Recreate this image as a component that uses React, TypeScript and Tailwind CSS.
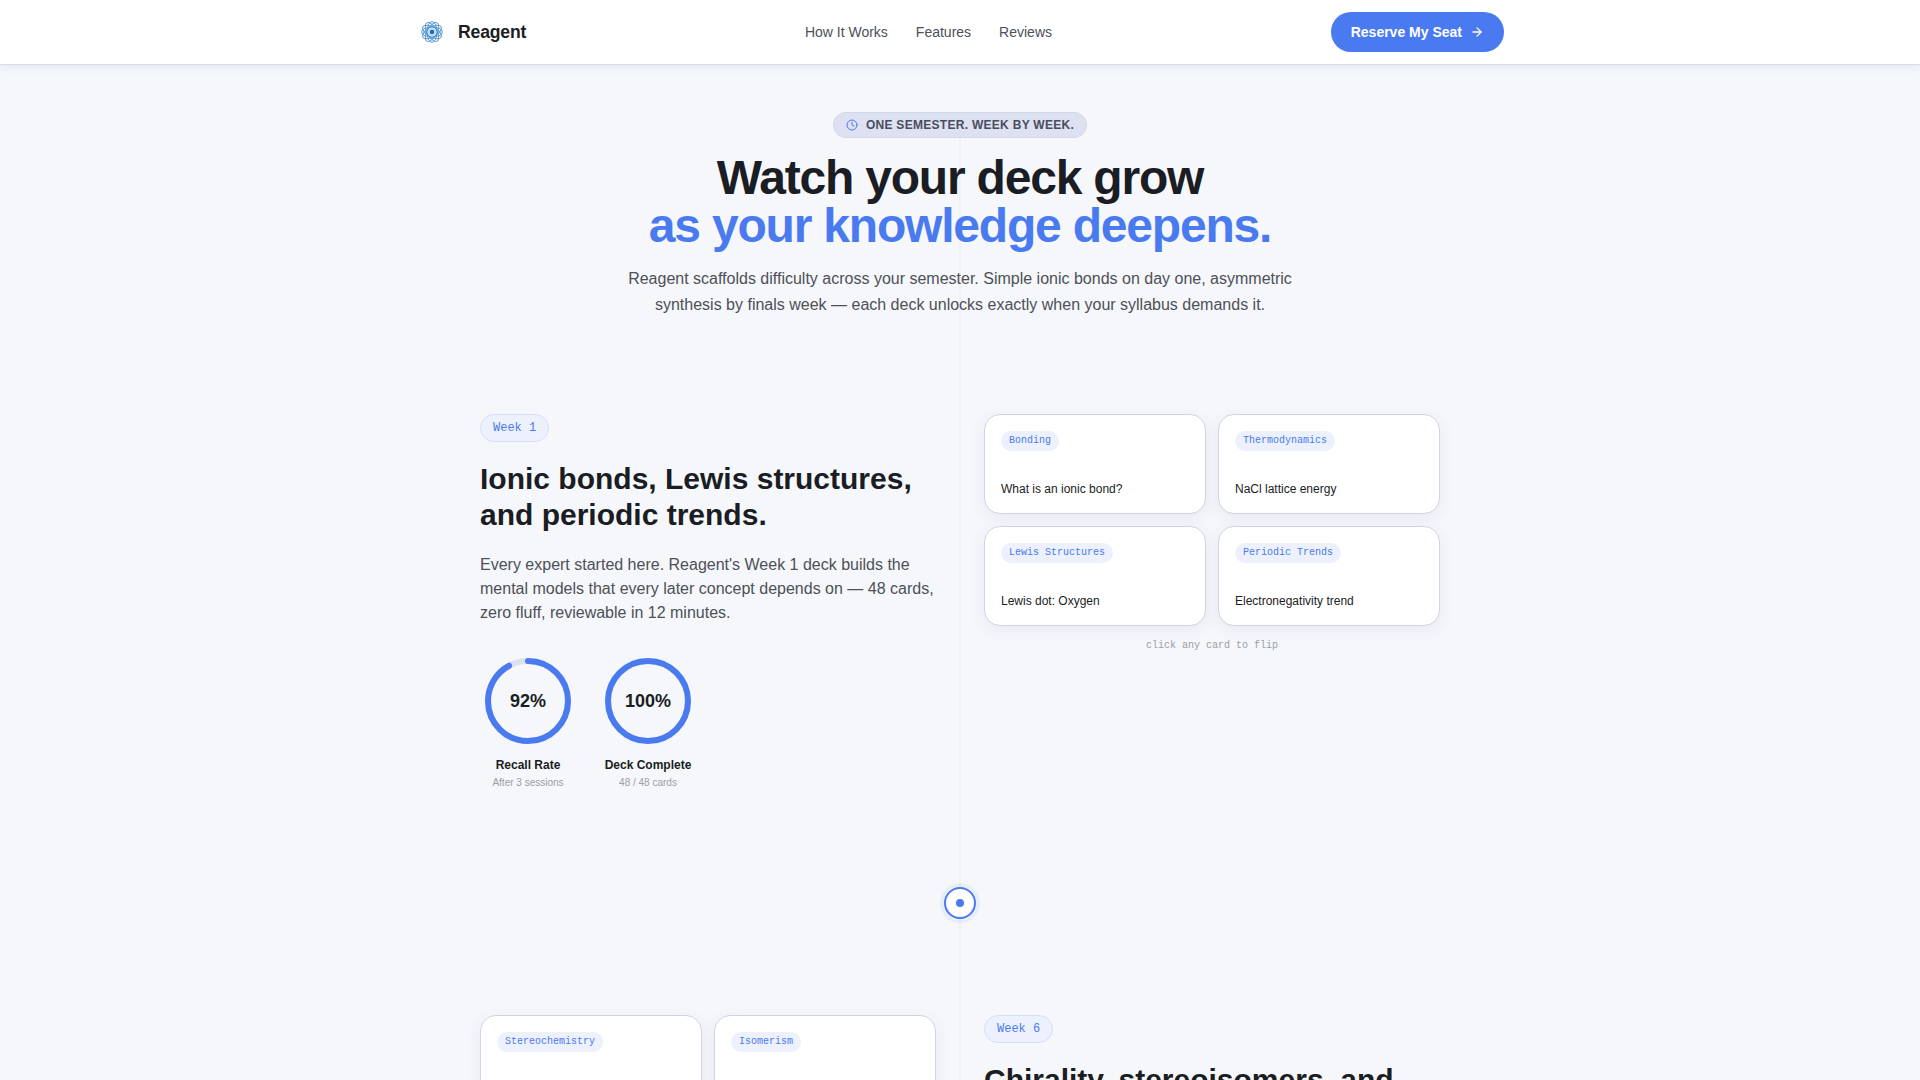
import React from 'react';
import { ArrowRight, Clock } from 'lucide-react';

const sans = '"Liberation Sans", Arial, sans-serif';

function Logo() {
  const angles = [0, 30, 60, 90, 120, 150];
  return (
    <svg width="28" height="28" viewBox="-2 -2 28 28" fill="none">
      {angles.map((a) => (
        <ellipse key={a} cx="12" cy="12" rx="10.5" ry="5" stroke="#3f86cc" strokeWidth="1" opacity="0.8" transform={`rotate(${a} 12 12)`} />
      ))}
      <circle cx="12" cy="12" r="4" fill="#5a9fe0" opacity="0.4" />
      <circle cx="12" cy="12" r="2.2" fill="#2468b4" />
    </svg>
  );
}

function FlashCard({ tag, title }: { tag: string; title: string }) {
  return (
    <div className="flex h-[100px] flex-col justify-between rounded-2xl border border-[#d0d4e6] bg-white px-4 pt-4 pb-[15px] shadow-[0_4px_16px_rgba(60,80,140,0.08)]">
      <span className="self-start rounded-full bg-[#edf1fd] px-2 py-[3px] font-['Liberation_Mono',monospace] text-[10px] leading-[14px] text-[#4a7af0]">
        {tag}
      </span>
      <p className="text-xs leading-[18px] text-[#1a1d23]">{title}</p>
    </div>
  );
}

function Ring({ pct, value, label, sub }: { pct: number; value: string; label: string; sub: string }) {
  const r = 40;
  const c = 2 * Math.PI * r;
  return (
    <div className="flex w-24 flex-col items-center">
      <div className="relative h-24 w-24">
        <svg width="96" height="96" viewBox="0 0 96 96" className="-rotate-90">
          <circle cx="48" cy="48" r={r} fill="none" stroke="#dde1ef" strokeWidth="6" />
          <circle cx="48" cy="48" r={r} fill="none" stroke="#4a7af0" strokeWidth="6" strokeLinecap="round" strokeDasharray={`${(c * pct) / 100} ${c}`} />
        </svg>
        <span className="absolute inset-0 flex items-center justify-center text-lg font-bold text-[#1a1d23]">{value}</span>
      </div>
      <p className="mt-[7px] whitespace-nowrap text-xs leading-[18px] font-bold text-[#1a1d23]">{label}</p>
      <p className="mt-px whitespace-nowrap text-[10px] leading-4 text-[#9a9da6]">{sub}</p>
    </div>
  );
}

function WeekPill({ children }: { children: React.ReactNode }) {
  return (
    <span className="inline-block rounded-full border border-[#d6def6] bg-[#edf1fd] px-3 py-[5px] font-['Liberation_Mono',monospace] text-xs leading-4 text-[#4a7af0]">
      {children}
    </span>
  );
}

export default function App() {
  return (
    <div className="min-h-screen bg-[#f5f7fa]" style={{ fontFamily: sans }}>
      <nav className="sticky top-0 z-20 box-content h-16 border-b border-[#d9dcea] bg-white shadow-[0_2px_8px_rgba(60,80,160,0.1)]">
        <div className="mx-auto flex h-full w-[1088px] items-center justify-between">
          <div className="flex items-center gap-3 pl-[2px]">
            <Logo />
            <span className="text-[17.6px] font-bold tracking-[-0.01em] text-[#1a1d23]">Reagent</span>
          </div>
          <div className="flex items-center gap-7 text-sm text-[#4d5058]">
            <span>How It Works</span>
            <span>Features</span>
            <span>Reviews</span>
          </div>
          <button className="flex h-10 items-center gap-2 rounded-full bg-[#4a7af0] px-5 text-sm font-bold text-white">
            Reserve My Seat
            <ArrowRight size={14} strokeWidth={2.2} />
          </button>
        </div>
      </nav>

      <main className="relative">
        <div className="absolute top-[68px] bottom-0 left-1/2 w-0.5 -translate-x-1/2 bg-[#eff1f5]" />

        <header className="relative flex flex-col items-center pt-[47px] text-center">
          <div className="flex h-[26px] items-center gap-2 rounded-full border border-[#d3d7ea] bg-[#dde1f1] px-3 text-xs font-bold tracking-[0.024em] text-[#4a4d5f]">
            <Clock size={12} strokeWidth={2} className="text-[#4a7af0]" />
            ONE SEMESTER. WEEK BY WEEK.
          </div>
          <h1 className="mt-4 text-5xl leading-[48px] font-bold tracking-[-0.025em] text-[#1a1d23]">
            Watch your deck grow
            <br />
            <span className="text-[#4a7af0]">as your knowledge deepens.</span>
          </h1>
          <p className="mt-4 w-[680px] text-base leading-[26px] text-[#4d5058]">
            Reagent scaffolds difficulty across your semester. Simple ionic bonds on day one, asymmetric synthesis by finals week — each deck unlocks exactly when your syllabus demands it.
          </p>
        </header>

        <section className="relative mx-auto mt-[96px] grid w-[960px] grid-cols-2 gap-12">
          <div>
            <WeekPill>Week 1</WeekPill>
            <h2 className="mt-[19px] text-[30px] leading-9 font-bold text-[#1a1d23]">
              Ionic bonds, Lewis structures, and periodic trends.
            </h2>
            <p className="mt-5 text-base leading-6 text-[#4d5058]">
              Every expert started here. Reagent's Week 1 deck builds the mental models that every later concept depends on — 48 cards, zero fluff, reviewable in 12 minutes.
            </p>
            <div className="mt-7 flex gap-6">
              <Ring pct={92} value="92%" label="Recall Rate" sub="After 3 sessions" />
              <Ring pct={100} value="100%" label="Deck Complete" sub="48 / 48 cards" />
            </div>
          </div>
          <div>
            <div className="grid grid-cols-2 gap-3">
              <FlashCard tag="Bonding" title="What is an ionic bond?" />
              <FlashCard tag="Thermodynamics" title="NaCl lattice energy" />
              <FlashCard tag="Lewis Structures" title="Lewis dot: Oxygen" />
              <FlashCard tag="Periodic Trends" title="Electronegativity trend" />
            </div>
            <p className="mt-3 text-center font-['Liberation_Mono',monospace] text-[10px] leading-4 text-[#9a9da6]">click any card to flip</p>
          </div>
        </section>

        <div className="relative mx-auto mt-24 flex h-8 w-8 items-center justify-center rounded-full border-2 border-[#4a7af0] bg-white shadow-[0_0_0_4px_rgba(74,122,240,0.08)]">
          <div className="h-2 w-2 rounded-full bg-[#4a7af0]" />
        </div>

        <section className="relative mx-auto mt-24 grid w-[960px] grid-cols-2 gap-12 pb-16">
          <div className="grid grid-cols-2 gap-3">
            <FlashCard tag="Stereochemistry" title="R vs S configuration" />
            <FlashCard tag="Isomerism" title="Enantiomers vs diastereomers" />
          </div>
          <div>
            <WeekPill>Week 6</WeekPill>
            <h2 className="mt-[19px] text-[30px] leading-9 font-bold text-[#1a1d23]">
              Chirality, stereoisomers, and reaction mechanisms.
            </h2>
          </div>
        </section>
      </main>
    </div>
  );
}
